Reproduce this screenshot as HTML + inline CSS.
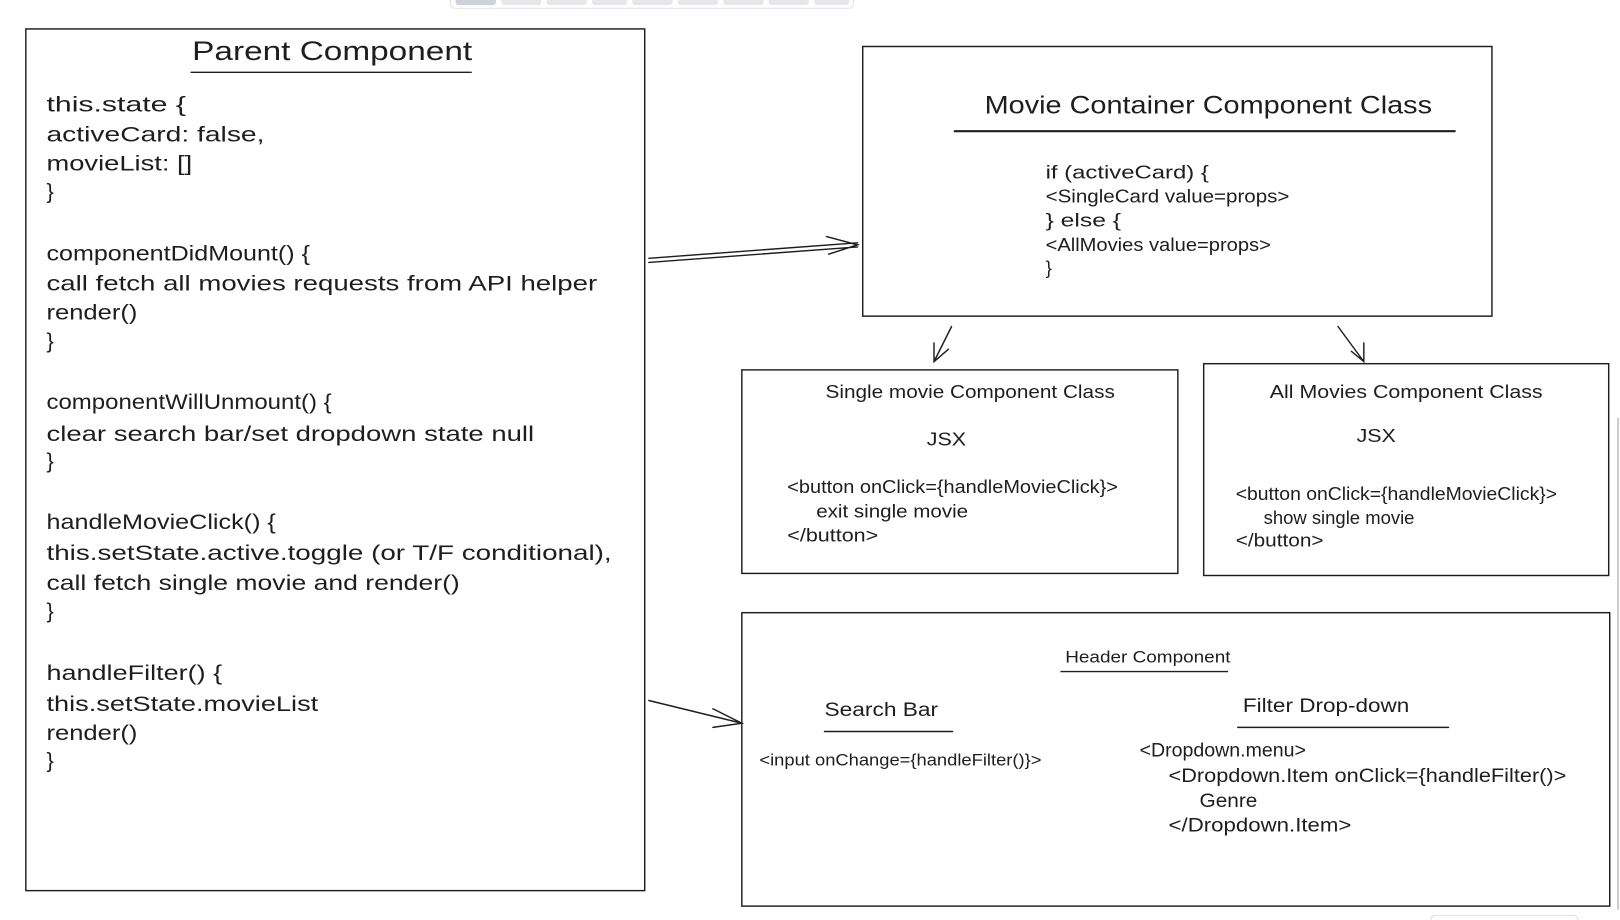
<!DOCTYPE html>
<html><head><meta charset="utf-8"><style>
html,body{margin:0;padding:0;background:#fff;width:1620px;height:920px;overflow:hidden}
svg text{font-family:"Liberation Sans",sans-serif;fill:#1e1e1e}
</style></head><body>
<svg width="1620" height="920" xmlns="http://www.w3.org/2000/svg">
<g transform="scale(1.0332)">
<g fill="#e5e7eb" stroke="none">
<rect x="436" y="-6" width="390" height="14" rx="4" fill="#fff" stroke="#e3e3e3"/>
<rect x="441" y="-4" width="39" height="9" rx="3" fill="#ced2d8"/>
<rect x="485" y="-4" width="39" height="9" rx="3"/>
<rect x="529" y="-4" width="39" height="9" rx="3"/>
<rect x="573" y="-4" width="34" height="9" rx="3"/>
<rect x="612" y="-4" width="39" height="9" rx="3"/>
<rect x="656" y="-4" width="39" height="9" rx="3"/>
<rect x="700" y="-4" width="39" height="9" rx="3"/>
<rect x="744" y="-4" width="39" height="9" rx="3"/>
<rect x="788" y="-4" width="34" height="9" rx="3"/>
<rect x="1385" y="886" width="142" height="10" rx="4" fill="#fff" stroke="#dde"/>
</g>
<g fill="none" stroke="#1e1e1e" stroke-width="1.4" stroke-linecap="round">
<rect x="25" y="28" width="599" height="834"/>
<rect x="835" y="45" width="609" height="261"/>
<rect x="718" y="358" width="422" height="197"/>
<rect x="1165" y="352" width="392" height="205"/>
<rect x="718" y="593" width="840" height="284"/>
<line x1="1566" y1="405" x2="1566" y2="880" stroke="#bbb"/>
<line x1="185" y1="70" x2="456" y2="70"/>
<line x1="924" y1="127" x2="1408" y2="127" stroke-width="2"/>
<line x1="1027" y1="650" x2="1188" y2="650"/>
<line x1="798" y1="708" x2="922" y2="708"/>
<line x1="1198" y1="704" x2="1402" y2="704"/>
<path d="M628 250 L830 235 M628 254 L830 239 M800 229 L830 237 L802 246"/>
<path d="M628 678 L718 700 M690 686 L718 700 L690 704"/>
<path d="M921 316 L904 350 M904 332 L904 350 L918 338"/>
<path d="M1295 316 L1320 350 M1308 340 L1320 350 L1320 332"/>
</g>
<text x="186" y="58" font-size="26" textLength="271" lengthAdjust="spacingAndGlyphs">Parent Component</text>
<g font-size="21">
<text x="45" y="108" textLength="135" lengthAdjust="spacingAndGlyphs">this.state {</text>
<text x="45" y="137" textLength="211" lengthAdjust="spacingAndGlyphs">activeCard: false,</text>
<text x="45" y="165" textLength="141" lengthAdjust="spacingAndGlyphs">movieList: []</text>
<text x="45" y="192">}</text>
<text x="45" y="252" textLength="255" lengthAdjust="spacingAndGlyphs">componentDidMount() {</text>
<text x="45" y="281" textLength="533" lengthAdjust="spacingAndGlyphs">call fetch all movies requests from API helper</text>
<text x="45" y="309" textLength="88" lengthAdjust="spacingAndGlyphs">render()</text>
<text x="45" y="337">}</text>
<text x="45" y="396" textLength="276" lengthAdjust="spacingAndGlyphs">componentWillUnmount() {</text>
<text x="45" y="427" textLength="472" lengthAdjust="spacingAndGlyphs">clear search bar/set dropdown state null</text>
<text x="45" y="453">}</text>
<text x="45" y="512" textLength="222" lengthAdjust="spacingAndGlyphs">handleMovieClick() {</text>
<text x="45" y="542" textLength="547" lengthAdjust="spacingAndGlyphs">this.setState.active.toggle (or T/F conditional),</text>
<text x="45" y="571" textLength="400" lengthAdjust="spacingAndGlyphs">call fetch single movie and render()</text>
<text x="45" y="598">}</text>
<text x="45" y="658" textLength="170" lengthAdjust="spacingAndGlyphs">handleFilter() {</text>
<text x="45" y="688" textLength="263" lengthAdjust="spacingAndGlyphs">this.setState.movieList</text>
<text x="45" y="716" textLength="88" lengthAdjust="spacingAndGlyphs">render()</text>
<text x="45" y="743">}</text>
</g>
<text x="953" y="110" font-size="24" textLength="433" lengthAdjust="spacingAndGlyphs">Movie Container Component Class</text>
<g font-size="18">
<text x="1012" y="173" textLength="158" lengthAdjust="spacingAndGlyphs">if (activeCard) {</text>
<text x="1012" y="196" textLength="236" lengthAdjust="spacingAndGlyphs">&lt;SingleCard value=props&gt;</text>
<text x="1012" y="219" textLength="73" lengthAdjust="spacingAndGlyphs">} else {</text>
<text x="1012" y="243" textLength="218" lengthAdjust="spacingAndGlyphs">&lt;AllMovies value=props&gt;</text>
<text x="1012" y="265">}</text>
</g>
<g font-size="18">
<text x="799" y="385" textLength="280" lengthAdjust="spacingAndGlyphs">Single movie Component Class</text>
<text x="897" y="431" textLength="38" lengthAdjust="spacingAndGlyphs">JSX</text>
<text x="762" y="477" textLength="320" lengthAdjust="spacingAndGlyphs">&lt;button onClick={handleMovieClick}&gt;</text>
<text x="790" y="501" textLength="147" lengthAdjust="spacingAndGlyphs">exit single movie</text>
<text x="762" y="524" textLength="88" lengthAdjust="spacingAndGlyphs">&lt;/button&gt;</text>
<text x="1229" y="385" textLength="264" lengthAdjust="spacingAndGlyphs">All Movies Component Class</text>
<text x="1313" y="428" textLength="38" lengthAdjust="spacingAndGlyphs">JSX</text>
<text x="1196" y="484" textLength="311" lengthAdjust="spacingAndGlyphs">&lt;button onClick={handleMovieClick}&gt;</text>
<text x="1223" y="507" textLength="146" lengthAdjust="spacingAndGlyphs">show single movie</text>
<text x="1196" y="529" textLength="85" lengthAdjust="spacingAndGlyphs">&lt;/button&gt;</text>
</g>
<text x="1031" y="641" font-size="16" textLength="160" lengthAdjust="spacingAndGlyphs">Header Component</text>
<text x="798" y="693" font-size="19" textLength="110" lengthAdjust="spacingAndGlyphs">Search Bar</text>
<text x="735" y="741" font-size="16" textLength="273" lengthAdjust="spacingAndGlyphs">&lt;input onChange={handleFilter()}&gt;</text>
<text x="1203" y="689" font-size="19" textLength="161" lengthAdjust="spacingAndGlyphs">Filter Drop-down</text>
<g font-size="19">
<text x="1103" y="732" textLength="161" lengthAdjust="spacingAndGlyphs">&lt;Dropdown.menu&gt;</text>
<text x="1131" y="757" textLength="385" lengthAdjust="spacingAndGlyphs">&lt;Dropdown.Item onClick={handleFilter()&gt;</text>
<text x="1161" y="781" textLength="56" lengthAdjust="spacingAndGlyphs">Genre</text>
<text x="1131" y="805" textLength="177" lengthAdjust="spacingAndGlyphs">&lt;/Dropdown.Item&gt;</text>
</g>
</g>
</svg>
</body></html>
